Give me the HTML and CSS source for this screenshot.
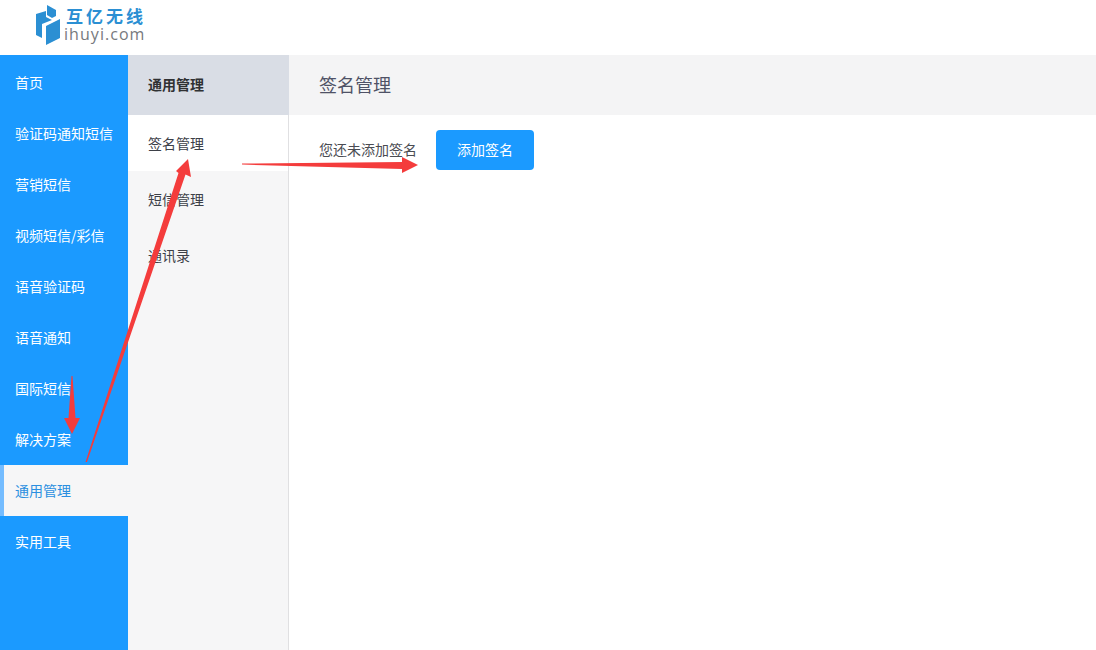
FILE: index.html
```html
<!DOCTYPE html>
<html lang="zh-CN">
<head>
<meta charset="utf-8">
<title>签名管理</title>
<link rel="stylesheet" href="styles.css">
</head>
<body>
<header class="topbar">
  <div class="logo">
    <svg class="logo-mark" viewBox="0 0 26 42" width="26" height="42" aria-hidden="true">
      <path fill="#2b8fd3" d="M0 10 L10 7 L10 13 L16 16 L6 20 L6 34 L0 31 Z"/>
      <path fill="#2b8fd3" d="M11 1 L20 6 L20 12 L16 14 L11 11 Z"/>
      <path fill="#2b8fd3" d="M10 22 L24 15 L24 34 L10 41 Z"/>
    </svg>
    <div class="logo-text">
      <div class="logo-cn">互亿无线</div>
      <div class="logo-en">ihuyi.com</div>
    </div>
  </div>
</header>
<div class="layout">
  <nav class="side">
    <a class="side-item">首页</a>
    <a class="side-item">验证码通知短信</a>
    <a class="side-item">营销短信</a>
    <a class="side-item">视频短信/彩信</a>
    <a class="side-item">语音验证码</a>
    <a class="side-item">语音通知</a>
    <a class="side-item">国际短信</a>
    <a class="side-item">解决方案</a>
    <a class="side-item side-active">通用管理</a>
    <a class="side-item">实用工具</a>
  </nav>
  <aside class="sub">
    <div class="sub-head">通用管理</div>
    <a class="sub-item sub-active">签名管理</a>
    <a class="sub-item">短信管理</a>
    <a class="sub-item">通讯录</a>
  </aside>
  <main class="main">
    <div class="main-head">签名管理</div>
    <div class="main-body">
      <span class="empty">您还未添加签名</span>
      <button class="btn" type="button">添加签名</button>
    </div>
  </main>
</div>
<svg class="marks" viewBox="0 0 1096 650" width="1096" height="650" aria-hidden="true">
  <path fill="#f43c3c" d="M85.5 462 L178.5 173 L176 171 L188 159 L191 177 L185.5 174.5 L87 462 Z"/>
  <path fill="#f43c3c" d="M242 163.6 L402 162 L402 157 L418 165 L402 173 L402 169 L242 164.6 Z"/>
  <path fill="#f43c3c" d="M71.5 376 L72.5 376 L75.5 418 L80 418 L72 434 L64 418 L68.5 418 Z"/>
</svg>
</body>
</html>
```
FILE: styles.css
```css
* { box-sizing: border-box; }
html, body { margin: 0; height: 650px; overflow: hidden; }
body {
  position: relative;
  display: flex;
  flex-direction: column;
  background: #fff;
  color: #303133;
  font-family: "Noto Sans CJK SC", "Noto Sans", sans-serif;
  font-size: 14px;
}
.topbar { height: 55px; flex: none; padding: 4px 0 0 36px; }
.logo { display: flex; gap: 2px; align-items: flex-start; }
.logo-mark { display: block; }
.logo-text { padding-top: 3px; }
.logo-cn { height: 19px; padding-left: 2px; font-size: 17px; line-height: 18px; font-weight: 700; letter-spacing: 3px; color: #2b8fd3; white-space: nowrap; }
.logo-en { font-family: "Open Sans", "Liberation Sans", sans-serif; font-size: 16px; line-height: 16px; letter-spacing: 1.05px; color: #77797d; }
.layout { flex: 1; display: flex; min-height: 0; }
.side { width: 128px; flex: none; padding-top: 2px; background: #1b9aff; }
.side-item { display: block; height: 51px; line-height: 51px; padding-left: 15px; color: #fff; white-space: nowrap; }
.side-active { padding-left: 11px; border-left: 4px solid #74bcff; background: #f6f6f7; color: #2b8fe0; }
.sub { width: 161px; flex: none; background: #f6f6f7; border-right: 1px solid #e0e0e2; }
.sub-head { height: 60px; line-height: 58px; padding-left: 20px; background: #d9dde5; font-weight: 700; color: #303133; margin-right: -1px; }
.sub-item { display: block; height: 56px; line-height: 56px; padding-left: 20px; color: #3d4048; }
.sub-active { background: #fff; }
.main { flex: 1; min-width: 0; }
.main-head { height: 60px; line-height: 58px; padding-left: 30px; background: #f4f4f5; font-size: 18px; color: #4f5266; }
.main-body { display: flex; align-items: center; gap: 19px; padding: 15px 0 0 30px; }
.empty { padding-bottom: 2px; color: #4a4c52; }
.btn { width: 98px; height: 40px; padding: 0 0 2px; border: 0; border-radius: 4px; background: #1b9aff; color: #fff; font: inherit; }
.marks { position: absolute; left: 0; top: 0; pointer-events: none; }
```
